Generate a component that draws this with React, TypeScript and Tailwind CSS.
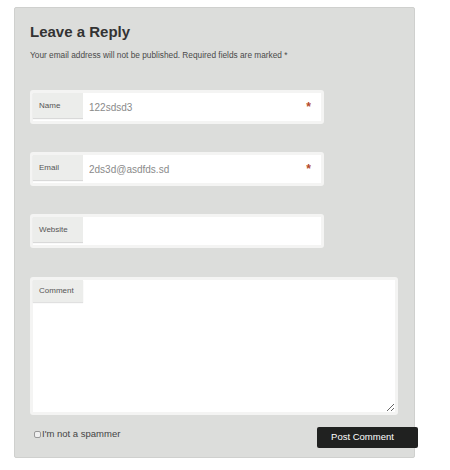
const Field = ({ label, value, required }: { label: string; value?: string; required?: boolean }) => {
	return (
		<div className="w-[294px] h-[34px] rounded-[3px] bg-[#f4f4f3] p-[3px]">
			<div className="flex h-full bg-white">
				<div className="w-[50px] h-[25px] bg-[#ecedeb] shadow-[0_1px_1px_rgba(0,0,0,0.15)] pl-[6px] pt-[1px] flex items-center text-[8px] text-[#555]">
					{label}
				</div>
				<input
					defaultValue={value}
					className="flex-1 min-w-0 h-full bg-white pl-[6px] text-[10px] text-[#8a8a8a] outline-none"
				/>
				{required && <span className="pr-[10px] pt-[5px] text-[12px] font-bold text-[#b3482a]">*</span>}
			</div>
		</div>
	)
}

export default function App() {
	return (
		<div className="w-[450px] h-[470px] bg-white pt-[7px] pl-[14px] font-['Liberation_Sans',Arial,sans-serif]">
			<div className="w-[401px] h-[451px] bg-[#dcdddb] border border-[#cfd0ce] rounded-[2px] pt-[15px] pl-[15px]">
				<h3 className="text-[15px] leading-[18px] font-bold text-[#333]">Leave a Reply</h3>
				<p className="mt-[8px] text-[8.3px] leading-[12px] text-[#4a4a4a]">
					Your email address will not be published. Required fields are marked *
				</p>

				<div className="mt-[29px] flex flex-col gap-[28px]">
					<Field label="Name" value="122sdsd3" required />
					<Field label="Email" value="2ds3d@asdfds.sd" required />
					<Field label="Website" />
				</div>

				<div className="relative mt-[29px] w-[368px] h-[138px] rounded-[3px] bg-[#f4f4f3] p-[3px]">
					<textarea className="block w-full h-full bg-white outline-none resize" />
					<div className="absolute left-[3px] top-[3px] w-[50px] h-[22px] bg-[#ecedeb] shadow-[0_1px_1px_rgba(0,0,0,0.12)] pl-[6px] flex items-center text-[8px] text-[#555]">
						Comment
					</div>
				</div>

				<div className="mt-[12px] w-[388px] flex items-center justify-between">
					<label className="flex items-center gap-[1px] pl-[4px] -mt-[6px] text-[9.5px] text-[#444]">
						<span className="w-[7px] h-[7px] rounded-[2px] border border-[#999] bg-[#f0f0f0]" />
						I'm not a spammer
					</label>
					<button className="w-[101px] h-[21px] rounded-[2px] bg-[#202120] text-white text-[9.5px] pr-[10px]">
						Post Comment
					</button>
				</div>
			</div>
		</div>
	)
}
